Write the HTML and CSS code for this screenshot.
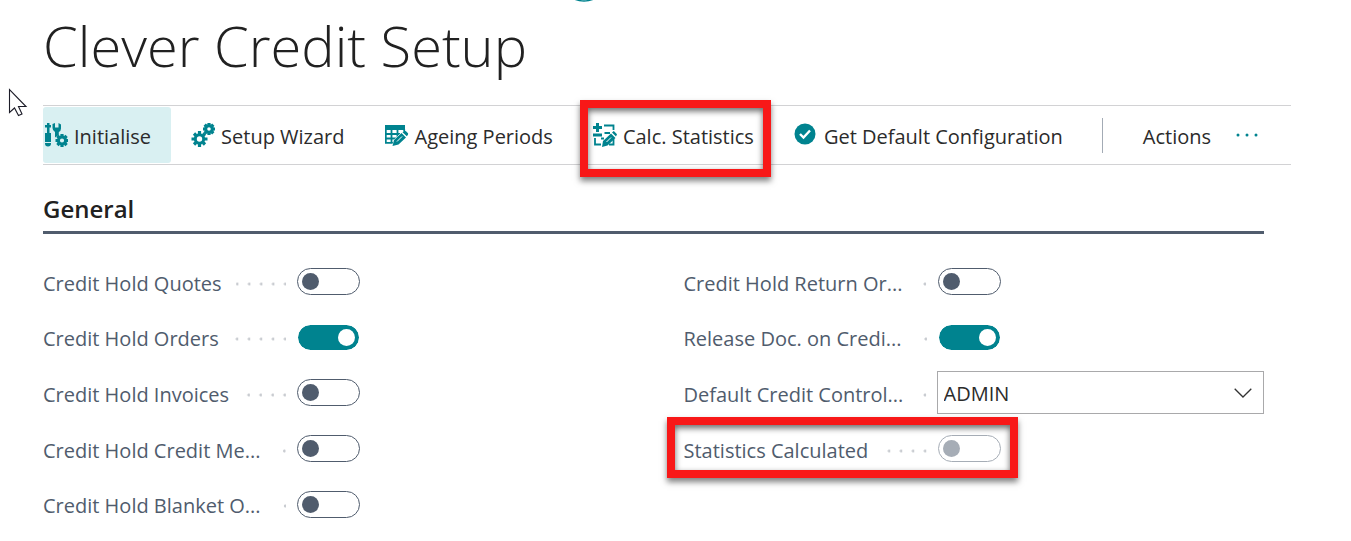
FILE: index.html
```html
<!DOCTYPE html>
<html lang="en">
<head>
<meta charset="utf-8">
<title>Clever Credit Setup</title>
<link rel="stylesheet" href="styles.css">
</head>
<body>
<svg class="ring" viewBox="0 0 46 4" aria-hidden="true"><circle cx="23" cy="-22.500" r="23.500"/></svg>
<svg class="cursor" viewBox="0 0 20 29" aria-hidden="true"><path d="M1.5 1.5V24.500L6.500 20L10.500 27.500L14 26L10.500 18.500H18Z"/></svg>
<main class="page">
  <h1 class="title">Clever Credit Setup</h1>
  <nav class="toolbar" aria-label="Actions">
    <button class="action action-active" type="button">
      <svg class="icon" viewBox="0 0 24 24" aria-hidden="true">
        <path d="M3 0H5.500V2H7V4.500H5.500V10H7V20.500Q7 23.500 4 23.500Q1 23.500 1 20.500V10H3V4.500H1V2H3Z"/>
        <path d="M8.500 1L11 0V4.500H14.500V0L17 1.500V5.500Q17 8 14.800 9V12L11 14.500V9Q8.500 7.500 8.500 5Z"/>
        <path class="gap" d="M1 19.500H7"/>
        <g transform="translate(18 17.500)"><circle class="gear" r="3.600"/><path class="teeth" d="M0-6.500V-4M0 6.500V4M-6.500 0H-4M6.500 0H4M-4.600-4.600L-3-3M4.600 4.600L3 3M4.600-4.600L3-3M-4.600 4.600L-3 3"/></g>
      </svg>
      <span class="caption">Initialise</span>
    </button>
    <button class="action" type="button">
      <svg class="icon" viewBox="0 0 24 24" aria-hidden="true">
        <g transform="translate(8.500 16)"><circle class="gear" r="4.200"/><path class="teeth" d="M0-8V-5M0 8V5M-8 0H-5M8 0H5M-5.500-5.500L-3.500-3.500M5.500 5.500L3.500 3.500M5.500-5.500L3.500-3.500M-5.500 5.500L-3.500 3.500"/></g>
        <g transform="translate(18 6)"><circle class="gear" r="3.300"/><path class="teeth" d="M0-6V-4M0 6V4M-6 0H-4M6 0H4M-4.300-4.300L-3-3M4.300 4.300L3 3M4.300-4.300L3-3M-4.300 4.300L-3 3"/></g>
      </svg>
      <span class="caption">Setup Wizard</span>
    </button>
    <button class="action" type="button">
      <svg class="icon" viewBox="0 0 24 24" aria-hidden="true">
        <path d="M0 2H20V7H0Z"/>
        <path class="line" d="M.8 6V19.800H9M6.500 7V20M12.500 7V14M19.200 6V9M0 11H15M0 15.500H11"/>
        <path class="halo" d="M8 23L9.500 17.500L18 9L22.500 13L14 21.500Z"/>
        <path d="M7.500 23L9 17L16.500 10L21 14.500L13.500 21.500ZM17.500 9.200L19 8Q20 7.500 21 8.200L23 10.200Q23.500 11 22.800 12L21.800 13.300Z"/>
        <path class="glint" d="M12 18.500L17 13.500"/>
      </svg>
      <span class="caption">Ageing Periods</span>
    </button>
    <button class="action" type="button">
      <svg class="icon" viewBox="0 0 24 24" aria-hidden="true">
        <path d="M3 0H6V3H9V6H6V9H3V6H0V3H3ZM0 10.500H9V13.500H0Z"/>
        <path class="line" d="M11 2.500H20.500V7M11.500 10H17M2 15V21.500H8M11 15.500H8M20.500 16V21.500H16"/>
        <path d="M9 24L10 18L18 10.500L22.500 15L14.500 22.500ZM19 9.500L20.800 8L24 11.200L23 13.500Z"/>
        <path class="glint" d="M13.500 19L18 14.500"/>
      </svg>
      <span class="caption">Calc. Statistics</span>
      <span class="callout callout-action"></span>
    </button>
    <button class="action" type="button">
      <svg class="icon" viewBox="0 0 24 24" aria-hidden="true"><circle cx="11" cy="11" r="10.500"/><path class="tick" d="M6 11L9.500 14.500L16 7.500"/></svg>
      <span class="caption">Get Default Configuration</span>
    </button>
    <span class="divider"></span>
    <button class="action action-plain" type="button"><span class="caption">Actions</span></button>
    <button class="more" type="button" aria-label="More options">
      <svg class="dots-icon" viewBox="0 0 24 4" aria-hidden="true"><circle cx="3" cy="2" r="1.500"/><circle cx="12" cy="2" r="1.500"/><circle cx="21" cy="2" r="1.500"/></svg>
    </button>
  </nav>
  <section class="general">
    <h2 class="heading">General</h2>
    <div class="columns">
      <div class="column">
        <div class="field"><label class="label" for="quotes">Credit Hold Quotes</label><input class="toggle" id="quotes" type="checkbox"></div>
        <div class="field"><label class="label" for="orders">Credit Hold Orders</label><input class="toggle" id="orders" type="checkbox" checked></div>
        <div class="field"><label class="label" for="invoices">Credit Hold Invoices</label><input class="toggle" id="invoices" type="checkbox"></div>
        <div class="field"><label class="label" for="memos">Credit Hold Credit Me...</label><input class="toggle" id="memos" type="checkbox"></div>
        <div class="field"><label class="label" for="blanket">Credit Hold Blanket O...</label><input class="toggle" id="blanket" type="checkbox"></div>
      </div>
      <div class="column">
        <div class="field"><label class="label" for="returns">Credit Hold Return Or...</label><input class="toggle" id="returns" type="checkbox"></div>
        <div class="field"><label class="label" for="release">Release Doc. on Credi...</label><input class="toggle" id="release" type="checkbox" checked></div>
        <div class="field"><label class="label" for="controller">Default Credit Control...</label>
          <div class="picker">
            <select class="select" id="controller"><option>ADMIN</option></select>
            <svg class="chevron" viewBox="0 0 18 10" aria-hidden="true"><path d="M.7.7L9 9L17.300.7"/></svg>
          </div>
        </div>
        <div class="field"><label class="label" for="calculated">Statistics Calculated</label><input class="toggle" id="calculated" type="checkbox" disabled><span class="callout callout-field"></span></div>
      </div>
    </div>
  </section>
</main>
</body>
</html>
```
FILE: styles.css
```css
* { box-sizing: border-box; }

body {
  margin: 0;
  position: relative;
  background: #fff;
  color: #2b2b2b;
  font: 20px/28px "Open Sans", "Segoe UI", sans-serif;
}

button, select { font: inherit; color: inherit; }

.page { padding: 7px 60px 0 43px; }

.title {
  margin: 0;
  color: #212121;
  font-size: 56px;
  font-weight: 300;
  line-height: 76px;
  white-space: nowrap;
}

.toolbar {
  display: flex;
  align-items: center;
  height: 60px;
  margin-top: 22px;
  border: solid #d2d2d4;
  border-width: 1px 0;
}

.action {
  position: relative;
  display: flex;
  align-items: center;
  gap: 6px;
  height: 56px;
  padding: 0 20px;
  border: 0;
  border-radius: 3px;
  background: none;
  white-space: nowrap;
}

.caption { padding-top: 3px; }

.action-active { padding-left: 1px; background: #d9f0f2; }
.action-plain { padding: 0 24px 0 40px; }

.icon { width: 24px; height: 24px; flex: none; fill: #00838f; }
.icon .gear { fill: none; stroke: #00838f; stroke-width: 3; }
.icon .teeth { fill: none; stroke: #00838f; stroke-width: 3.2; }
.icon .line { fill: none; stroke: #00838f; stroke-width: 1.8; }
.icon .halo { fill: #fff; stroke: #fff; stroke-width: 2; }
.icon .glint { stroke: #fff; stroke-width: 1; }
.icon .gap { stroke: #d9f0f2; stroke-width: 1; }
.icon .tick { fill: none; stroke: #fff; stroke-width: 2.4; }

.divider { width: 1px; height: 35px; margin-left: 19px; background: #a3abb5; }

.more { padding: 0; border: 0; background: none; }
.dots-icon { display: block; width: 24px; height: 4px; fill: #00838f; }

.general { margin-right: 27px; padding-top: 28px; }

.heading {
  margin: 0;
  padding-bottom: 6px;
  border-bottom: 3px solid #505c6d;
  color: #212121;
  font-size: 24px;
  font-weight: 600;
  line-height: 32px;
}

.columns {
  display: grid;
  grid-template-columns: 1fr 1fr;
  gap: 60px;
  padding-top: 20px;
}

.column {
  display: grid;
  grid-template-rows: repeat(5, 1fr);
  min-height: 278px;
}

.field {
  position: relative;
  display: grid;
  grid-template-columns: 243px 1fr;
  align-items: center;
  gap: 10px;
}

.label {
  display: flex;
  align-items: center;
  gap: 14px;
  padding-top: 4px;
  color: #505c6d;
  white-space: nowrap;
}

.label::after {
  content: "";
  flex: 1;
  height: 4px;
  background: radial-gradient(circle at 11px 2px, #c9ccd1 1px, transparent 2px) right / 12px 4px repeat-x;
}

.toggle {
  appearance: none;
  width: 63px;
  height: 27px;
  margin: 0 0 0 1px;
  border: 1px solid #505c6d;
  border-radius: 14px;
  background: #fff;
}

.toggle::before {
  content: "";
  display: block;
  width: 17px;
  height: 17px;
  margin: 4px;
  border-radius: 50%;
  background: #505c6d;
}

.toggle:checked { border-color: #fff; background: #00838f; background-clip: padding-box; }
.toggle:checked::before { margin-left: 40px; background: #fff; }
.toggle:disabled { border-color: #a6adb6; }
.toggle:disabled::before { background: #a6adb6; }

.picker { display: grid; align-items: center; }
.picker > * { grid-area: 1 / 1; }

.select {
  appearance: none;
  width: 100%;
  height: 43px;
  padding: 3px 6px 0;
  border: 1px solid #a9a9ab;
  border-radius: 0;
  background: #fff;
}

.chevron {
  justify-self: end;
  width: 18px;
  height: 10px;
  margin-right: 12px;
  fill: none;
  stroke: #333;
  stroke-width: 1.3;
  pointer-events: none;
}

.callout {
  position: absolute;
  border: 8px solid #f81818;
  box-shadow: 0 4px 6px rgba(0, 0, 0, .5), inset 0 3px 6px rgba(0, 0, 0, .6);
  pointer-events: none;
}

.callout-action { inset: -7px 3px -14px 7px; }
.callout-field { top: -4px; left: -17px; width: 351px; height: 61px; }

.ring { position: absolute; top: 0; left: 561px; width: 46px; height: 4px; fill: none; stroke: #00838f; stroke-width: 1.5; }
.cursor { position: absolute; top: 88px; left: 8px; width: 20px; height: 29px; fill: #fff; stroke: #1c1c28; stroke-width: 1.1; }
```
